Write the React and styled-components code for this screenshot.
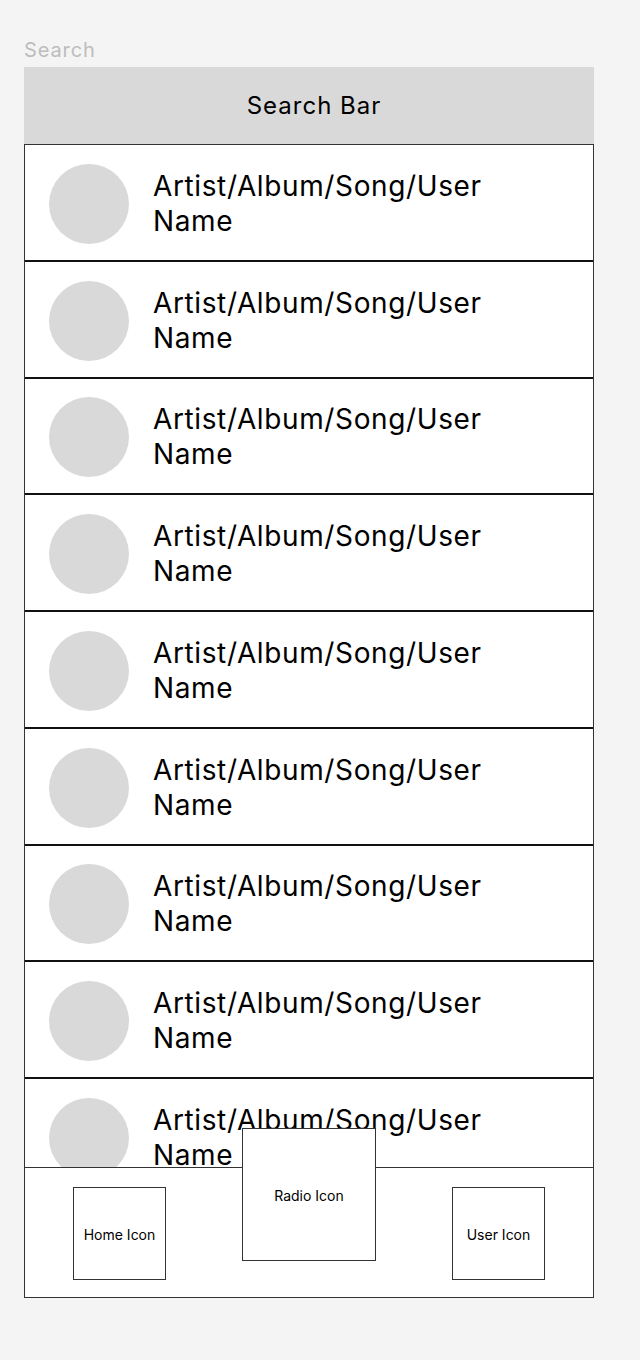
import React from "react";
import styled, { createGlobalStyle } from "styled-components";

const Global = createGlobalStyle`
  html, body { margin: 0; padding: 0; background: #f4f4f4; }
  body { font-family: Inter, "Noto Sans", Arial, sans-serif; color: #000; }
  * { box-sizing: border-box; }
`;

const Page = styled.div`
  width: 640px;
  height: 1360px;
  padding: 38px 0 0 24px;
`;

const Frame = styled.div`
  width: 570px;
  display: flex;
  flex-direction: column;
`;

const Label = styled.div`
  font-size: 20px;
  line-height: 24px;
  letter-spacing: 0.9px;
  color: #bdbdbd;
  margin-bottom: 5px;
`;

const SearchBar = styled.div`
  height: 77px;
  background: #d9d9d9;
  display: flex;
  align-items: center;
  justify-content: center;
  padding-left: 10px;
  font-size: 24px;
  letter-spacing: 1px;
`;

const List = styled.div`
  height: 1023px;
  overflow: hidden;
  background: #fff;
  border: 1px solid #333;
  border-bottom: none;
`;

const Row = styled.div`
  height: 116.75px;
  flex-shrink: 0;
  display: flex;
  align-items: center;
  gap: 24px;
  padding: 3px 0 0 24px;
  border-bottom: 2px solid #111;
`;

const Avatar = styled.div`
  width: 80px;
  height: 80px;
  border-radius: 50%;
  background: #d9d9d9;
  flex-shrink: 0;
`;

const Title = styled.div`
  width: 360px;
  font-size: 28px;
  line-height: 35px;
  letter-spacing: 0.62px;
`;

const Nav = styled.div`
  height: 131px;
  background: #fff;
  border: 1px solid #333;
  display: flex;
  justify-content: space-between;
  align-items: flex-start;
  padding: 19px 48px 0;
`;

const NavBox = styled.div`
  position: relative;
  width: ${(p) => p.$w}px;
  height: ${(p) => p.$h}px;
  margin-top: ${(p) => p.$lift || 0}px;
  background: #fff;
  border: 1px solid #333;
  display: flex;
  align-items: center;
  justify-content: center;
  padding-top: 2px;
  font-size: 14px;
`;

export default function App() {
  const rows = Array.from({ length: 9 });
  return (
    <Page>
      <Global />
      <Frame>
        <Label>Search</Label>
        <SearchBar>Search Bar</SearchBar>
        <List>
          {rows.map((_, i) => (
            <Row key={i}>
              <Avatar />
              <Title>Artist/Album/Song/User Name</Title>
            </Row>
          ))}
        </List>
        <Nav>
          <NavBox $w={93} $h={93}>Home Icon</NavBox>
          <NavBox $w={134} $h={133} $lift={-59}>Radio Icon</NavBox>
          <NavBox $w={93} $h={93}>User Icon</NavBox>
        </Nav>
      </Frame>
    </Page>
  );
}
